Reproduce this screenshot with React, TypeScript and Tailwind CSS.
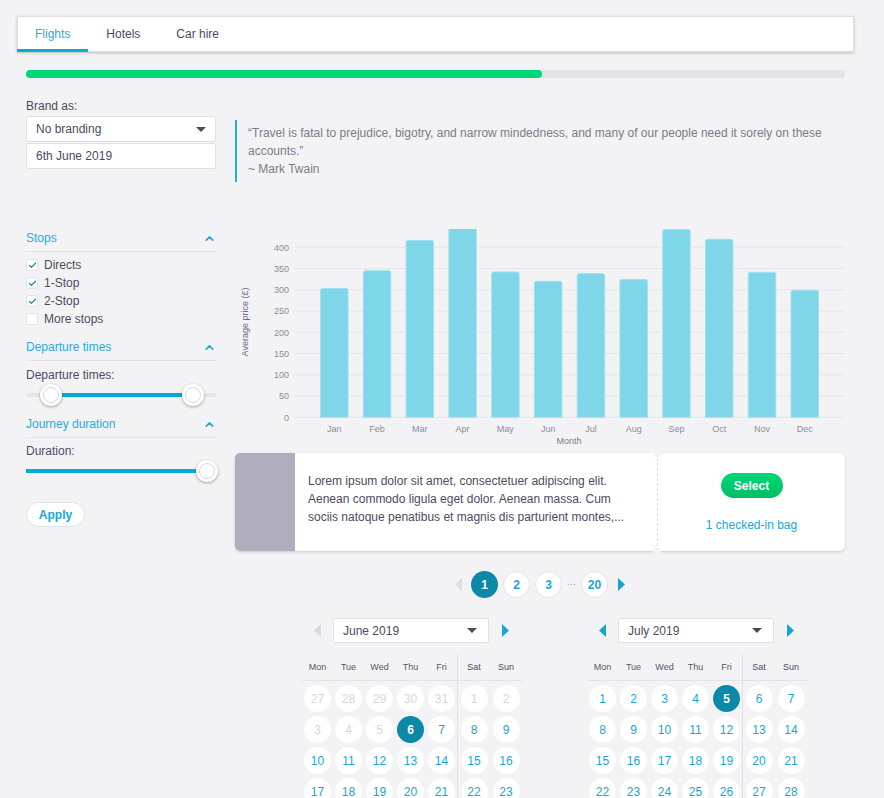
import { ChevronUp, Check } from 'lucide-react'

const months = ['Jan', 'Feb', 'Mar', 'Apr', 'May', 'Jun', 'Jul', 'Aug', 'Sep', 'Oct', 'Nov', 'Dec']
const prices = [303, 345, 416, 446, 342, 320, 338, 324, 442, 419, 341, 299]

const Y0 = 417.3
const K = 0.425

function Caret({ dir, color }: { dir: 'left' | 'right'; color: string }) {
  return (
    <svg width="7" height="13" viewBox="0 0 7 13">
      {dir === 'left' ? <polygon points="7,0 7,13 0,6.5" fill={color} /> : <polygon points="0,0 0,13 7,6.5" fill={color} />}
    </svg>
  )
}

function DropTri() {
  return (
    <svg width="10" height="5" viewBox="0 0 10 5">
      <polygon points="0,0 10,0 5,5" fill="#4c4b5e" />
    </svg>
  )
}

function Chart() {
  const ticks = [0, 50, 100, 150, 200, 250, 300, 350, 400]
  return (
    <svg width="610" height="218" viewBox="235 229 610 218" fontFamily="'Liberation Sans', Arial, sans-serif">
      {ticks.map((t) => {
        const y = Y0 - t * K
        return (
          <g key={t}>
            <line x1="293" x2="845" y1={y} y2={y} stroke="#e5e5eb" strokeWidth="1" />
            <text x="289" y={y + 3.2} textAnchor="end" fontSize="9" fill="#8b8a9b">
              {t}
            </text>
          </g>
        )
      })}
      <text
        x="246"
        y="322"
        transform="rotate(-90 246 322)"
        textAnchor="middle"
        dominantBaseline="middle"
        fontSize="9"
        fill="#6f6b86"
      >
        Average price (£)
      </text>
      {prices.map((p, i) => {
        const cx = 334.3 + i * 42.77
        const x = cx - 13.75
        const w = 27.5
        const top = Y0 - p * K
        const d = `M${x},${Y0} V${top + 2} Q${x},${top} ${x + 2},${top} H${x + w - 2} Q${x + w},${top} ${x + w},${top + 2} V${Y0} Z`
        return (
          <g key={months[i]}>
            <path d={d} fill="#7fd6e8" stroke="#9fe0ee" strokeWidth="1" />
            <text x={cx} y="431.5" textAnchor="middle" fontSize="9" fill="#8b8a9b">
              {months[i]}
            </text>
          </g>
        )
      })}
      <text x="569" y="443.8" textAnchor="middle" fontSize="9" fill="#7b7a8c">
        Month
      </text>
    </svg>
  )
}

function SectionHead({ title, className = '' }: { title: string; className?: string }) {
  return (
    <div className={`flex items-center justify-between border-b border-[#e3e3e9] pb-[4px] leading-[18px] text-[#24ace0] ${className}`}>
      <span>{title}</span>
      <ChevronUp size={13} strokeWidth={3} className="text-[#1aa9d8]" />
    </div>
  )
}

function Box({ label, on }: { label: string; on: boolean }) {
  return (
    <div className="flex h-[18px] items-center gap-[6px]">
      <span className="flex h-[12px] w-[12px] items-center justify-center rounded-[2px] border border-[#e2e2e8] bg-white">
        {on && <Check size={9} strokeWidth={3.5} className="text-[#1a8fb2]" />}
      </span>
      <span>{label}</span>
    </div>
  )
}

function Thumb({ left }: { left: number }) {
  return (
    <div
      className="absolute top-0 flex h-[22px] w-[22px] items-center justify-center rounded-full bg-white shadow-[0_1px_3px_rgba(0,0,0,0.35)]"
      style={{ left }}
    >
      <div className="h-[16px] w-[16px] rounded-full border border-[#d8d8e0]" />
    </div>
  )
}

function Slider({ from, to, thumbs }: { from: number; to: number; thumbs: number[] }) {
  return (
    <div className="relative h-[22px]">
      <div className="absolute left-0 right-0 top-[9px] h-[4px] rounded-full bg-[#e4e4ea]" />
      <div className="absolute top-[9px] h-[4px] bg-[#00acd4]" style={{ left: from, width: to - from }} />
      {thumbs.map((t) => (
        <Thumb key={t} left={t - 11} />
      ))}
    </div>
  )
}

type Day = { n: number; off?: boolean; sel?: boolean }

function DayCell({ d }: { d: Day }) {
  return (
    <div
      className={`flex h-[27px] w-[27px] items-center justify-center rounded-full text-[12px] ${
        d.sel ? 'bg-[#0b89a6] font-bold text-white' : d.off ? 'bg-white text-[#d6d6de]' : 'bg-white text-[#17a6d3]'
      }`}
    >
      {d.n}
    </div>
  )
}

function Calendar({ title, weeks, prevOn }: { title: string; weeks: Day[][]; prevOn: boolean }) {
  return (
    <div className="w-[220px]">
      <div className="flex h-[25px] items-center">
        <div className="flex w-[31px] justify-center">
          <Caret dir="left" color={prevOn ? '#14a7d3' : '#d9d9e1'} />
        </div>
        <div className="flex h-[25px] w-[156px] items-center justify-between rounded-[2px] border border-[#dfdfe6] bg-white pl-[9px] pr-[11px] text-[#4c4b5e]">
          <span>{title}</span>
          <DropTri />
        </div>
        <div className="flex w-[33px] justify-center">
          <Caret dir="right" color="#14a7d3" />
        </div>
      </div>
      <div className="mt-[11px] flex">
        <div className="w-[155px]">
          <div className="grid h-[27px] grid-cols-5 items-center border-b border-[#e2e2e8] pt-[2px] text-center text-[9px] text-[#55546a]">
            {['Mon', 'Tue', 'Wed', 'Thu', 'Fri'].map((w) => (
              <span key={w}>{w}</span>
            ))}
          </div>
          <div className="mt-[4px] grid grid-cols-5 justify-items-center gap-y-[4px]">
            {weeks.flatMap((wk, r) => wk.slice(0, 5).map((d, c) => <DayCell key={`${r}-${c}`} d={d} />))}
          </div>
        </div>
        <div className="w-[65px] border-l border-[#e2e2e8]">
          <div className="grid h-[27px] grid-cols-2 items-center border-b border-[#e2e2e8] pt-[2px] text-center text-[9px] text-[#4a495e]">
            <span>Sat</span>
            <span>Sun</span>
          </div>
          <div className="mt-[4px] grid grid-cols-2 justify-items-center gap-y-[4px]">
            {weeks.flatMap((wk, r) => wk.slice(5).map((d, c) => <DayCell key={`${r}-${c}`} d={d} />))}
          </div>
        </div>
      </div>
    </div>
  )
}

const june: Day[][] = [
  [{ n: 27, off: true }, { n: 28, off: true }, { n: 29, off: true }, { n: 30, off: true }, { n: 31, off: true }, { n: 1, off: true }, { n: 2, off: true }],
  [{ n: 3, off: true }, { n: 4, off: true }, { n: 5, off: true }, { n: 6, sel: true }, { n: 7 }, { n: 8 }, { n: 9 }],
  [10, 11, 12, 13, 14, 15, 16].map((n) => ({ n })),
  [17, 18, 19, 20, 21, 22, 23].map((n) => ({ n })),
  [24, 25, 26, 27, 28, 29, 30].map((n) => ({ n })),
]

const july: Day[][] = [
  [1, 2, 3, 4, 5, 6, 7].map((n) => ({ n, sel: n === 5 })),
  [8, 9, 10, 11, 12, 13, 14].map((n) => ({ n })),
  [15, 16, 17, 18, 19, 20, 21].map((n) => ({ n })),
  [22, 23, 24, 25, 26, 27, 28].map((n) => ({ n })),
  [29, 30, 31, 1, 2, 3, 4].map((n, i) => ({ n, off: i > 2 })),
]

export default function App() {
  return (
    <div className="h-screen overflow-hidden bg-[#f3f3f6] pl-[17px] pt-[16px] font-['Liberation_Sans',Arial,sans-serif] text-[12px] text-[#4c4b5e]">
      <div className="flex h-[36px] w-[837px] border border-[#dedee4] bg-white shadow-[0_1px_3px_rgba(0,0,0,0.22)]">
        <div className="relative -ml-px flex items-center px-[18px] text-[#34a7dc]">
          Flights
          <span className="absolute -bottom-px left-0 right-0 h-[3px] bg-[#00aed6]" />
        </div>
        <div className="flex items-center px-[18px]">Hotels</div>
        <div className="flex items-center px-[18px]">Car hire</div>
      </div>

      <div className="ml-[9px] w-[819px]">
        <div className="mt-[18px] h-[8px] rounded-full bg-[#e3e3ea]">
          <div className="h-[8px] w-[516px] rounded-full bg-[#00d778]" />
        </div>

        <div className="mt-[19px] flex">
          <div className="w-[190px]">
            <div className="h-[19px] leading-[18px]">Brand as:</div>
            <div className="flex h-[26px] items-center justify-between rounded-[2px] border border-[#e0e0e6] bg-white pl-[9px] pr-[9px]">
              <span>No branding</span>
              <DropTri />
            </div>
            <div className="mt-[1px] flex h-[26px] items-center rounded-[2px] border border-[#e0e0e6] bg-white pl-[9px]">
              6th June 2019
            </div>
          </div>
          <div className="ml-[19px] mt-[23px] w-[610px] border-l-2 border-[#19b4d6] py-[4px] pl-[11px] leading-[18px] text-[#7b7a8c]">
            “Travel is fatal to prejudice, bigotry, and narrow mindedness, and many of our people need it sorely on these
            accounts.”
            <br />~ Mark Twain
          </div>
        </div>

        <div className="mt-[47px] flex">
          <aside className="w-[190px]">
            <SectionHead title="Stops" />
            <div className="mt-[4px]">
              <Box label="Directs" on />
              <Box label="1-Stop" on />
              <Box label="2-Stop" on />
              <Box label="More stops" on={false} />
            </div>
            <SectionHead title="Departure times" className="mt-[10px]" />
            <div className="mt-[5px] leading-[18px]">Departure times:</div>
            <Slider from={25} to={167} thumbs={[25, 167]} />
            <SectionHead title="Journey duration" className="mt-[9px]" />
            <div className="mt-[4px] leading-[18px]">Duration:</div>
            <Slider from={0} to={181} thumbs={[181]} />
            <button className="mt-[20px] h-[25px] w-[59px] rounded-full border border-[#e0e0e7] bg-white font-bold text-[#17a6d3]">
              Apply
            </button>
          </aside>

          <main className="ml-[19px] w-[610px]">
            <Chart />

            <div className="relative mt-[6px] flex h-[98px] rounded-[5px] bg-white shadow-[0_1px_3px_rgba(0,0,0,0.18)]">
              <div className="w-[60px] rounded-l-[5px] bg-[#b0adbd]" />
              <div className="w-[362px] pl-[13px] pr-[24px] pt-[19px] leading-[18px]">
                Lorem ipsum dolor sit amet, consectetuer adipiscing elit. Aenean commodo ligula eget dolor. Aenean massa. Cum
                sociis natoque penatibus et magnis dis parturient montes,...
              </div>
              <div className="relative flex flex-1 flex-col items-center border-l border-dashed border-[#dcdce3] pt-[20px]">
                <span className="absolute -left-[5px] -top-[4px] h-[8px] w-[8px] rounded-full bg-[#f3f3f6]" />
                <span className="absolute -bottom-[4px] -left-[5px] h-[8px] w-[8px] rounded-full bg-[#f3f3f6]" />
                <button className="h-[25px] w-[62px] rounded-full bg-linear-to-b from-[#00d878] to-[#00bd64] font-bold text-white">
                  Select
                </button>
                <div className="mt-[18px] leading-[18px] text-[#22a5d8]">1 checked-in bag</div>
              </div>
            </div>

            <div className="mt-[20px] flex h-[27px] items-center justify-center">
              <Caret dir="left" color="#dcdce3" />
              <div className="ml-[9px] flex items-center gap-[5px] font-bold text-[#17a6d3]">
                <span className="flex h-[27px] w-[27px] items-center justify-center rounded-full bg-[#0b89a6] text-white">1</span>
                <span className="flex h-[27px] w-[27px] items-center justify-center rounded-full border border-[#e2e2e8] bg-white">2</span>
                <span className="flex h-[27px] w-[27px] items-center justify-center rounded-full border border-[#e2e2e8] bg-white">3</span>
                <span className="w-[9px] text-center text-[9px] font-normal leading-none text-[#8b8a9b]">···</span>
                <span className="flex h-[27px] w-[27px] items-center justify-center rounded-full border border-[#e2e2e8] bg-white">20</span>
              </div>
              <div className="ml-[10px] flex">
                <Caret dir="right" color="#14a7d3" />
              </div>
            </div>

            <div className="ml-[67px] mt-[20px] flex gap-[65px]">
              <Calendar title="June 2019" weeks={june} prevOn={false} />
              <Calendar title="July 2019" weeks={july} prevOn />
            </div>
          </main>
        </div>
      </div>
    </div>
  )
}
